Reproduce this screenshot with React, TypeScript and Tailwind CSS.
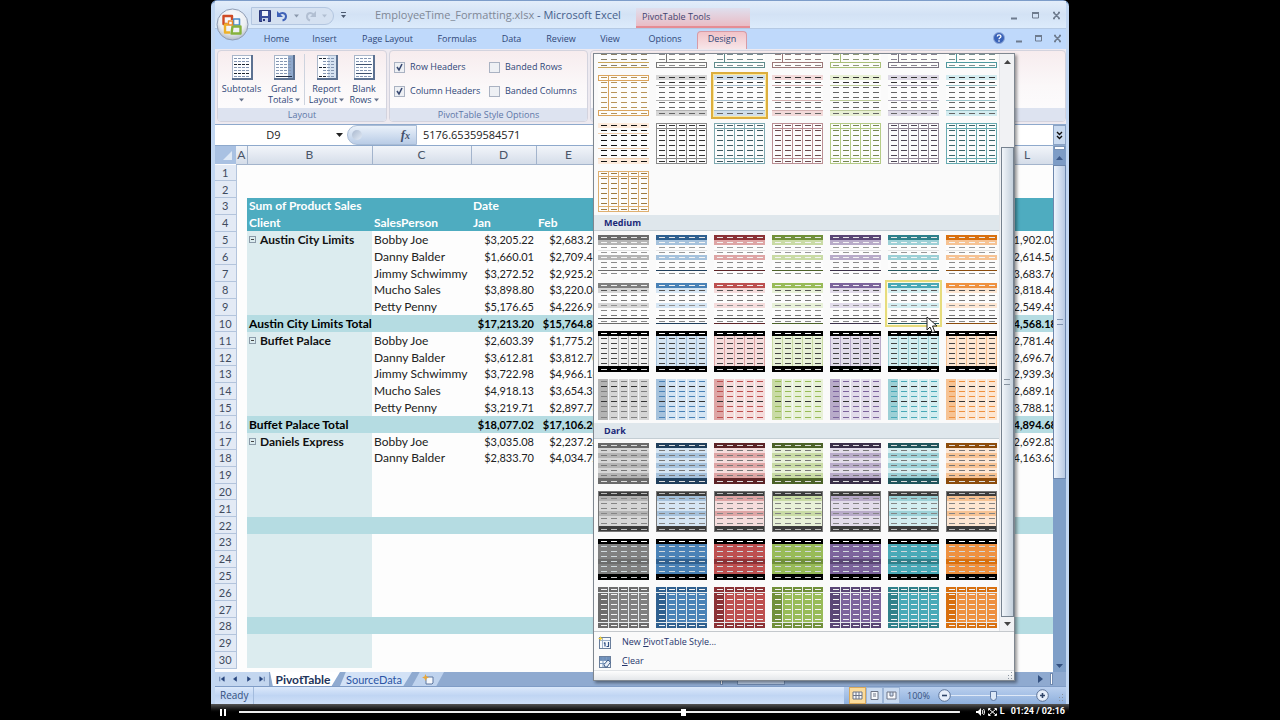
import type { ReactNode } from "react";

interface Palette {
  name: string;
  base: string;
  dark: string;
  deep: string;
  mid: string;
  light: string;
  pale: string;
}

const palettes: Palette[] = [
  { name: "Gray", base: "#808080", dark: "#6c6c6c", deep: "#6a6a6a", mid: "#b4b4b4", light: "#d6d6d6", pale: "#f0f0f0" },
  { name: "Blue", base: "#4a82b6", dark: "#2f608f", deep: "#203f5c", mid: "#a6c2dc", light: "#d5e5f3", pale: "#d5e5f3" },
  { name: "Red", base: "#bd5050", dark: "#8c3236", deep: "#5d2427", mid: "#dea5a5", light: "#f5dcdc", pale: "#f5dcdc" },
  { name: "Green", base: "#98bb58", dark: "#71903a", deep: "#4c6228", mid: "#c9dba5", light: "#e8f1d8", pale: "#e8f1d8" },
  { name: "Purple", base: "#7c649c", dark: "#5b4776", deep: "#3b3049", mid: "#b8abc9", light: "#e2dcea", pale: "#e2dcea" },
  { name: "Teal", base: "#49a9b7", dark: "#2f808a", deep: "#21565d", mid: "#9dd0d6", light: "#d3edf0", pale: "#d3edf0" },
  { name: "Orange", base: "#ee9140", dark: "#d8700f", deep: "#8c4c0c", mid: "#f6c394", light: "#fde6d2", pale: "#fde6d2" },
];

interface ThumbStyle {
  fills: string[];
  dashes: string[];
  firstCol?: string;
  outline?: string;
  columns?: string;
  boxes?: { y: number; color: string }[];
  stem?: string;
  lines?: { y: number; color: string }[];
}

const W = "#fcfcfc";
const repeat = (color: string, n = 8) => Array<string>(n).fill(color);

const boxed = (line: string, dash: string): ThumbStyle => ({
  fills: repeat("#fdfdfb"),
  dashes: repeat(dash),
  stem: line,
  boxes: [
    { y: 0, color: line },
    { y: 35, color: line },
  ],
});

const banded = (light: string, line: string): ThumbStyle => ({
  fills: [light, ...repeat(W, 6), light],
  dashes: ["#333", "#333", ...repeat("#666", 6)],
  lines: [
    { y: 10, color: line },
    { y: 25, color: line },
    { y: 35, color: line },
  ],
});

const gridded = (line: string, dash: string): ThumbStyle => ({
  fills: repeat(W),
  dashes: repeat(dash),
  outline: line,
  columns: line,
  lines: [
    { y: 5, color: line },
    { y: 35, color: line },
  ],
});

const medium1 = (p: Palette): ThumbStyle => ({
  fills: [p.dark, p.mid, W, W, p.mid, W, W, W],
  dashes: ["#e8e8e8", "#f4f4f4", "#9a9a9a", "#9a9a9a", "#f4f4f4", "#8a8a8a", "#8a8a8a", "#8a8a8a"],
  lines: [
    { y: 15, color: "#e4e4e4" },
    { y: 35, color: p.deep },
  ],
});

const medium2 = (p: Palette): ThumbStyle => ({
  fills: [p.base, p.light, W, W, p.light, W, W, W],
  dashes: ["#f0f0f0", "#555", "#777", "#777", "#909090", "#888", "#777", "#888"],
  lines: [
    { y: 35, color: "#444" },
    { y: 40, color: p.deep },
  ],
});

const medium3 = (p: Palette): ThumbStyle => ({
  fills: ["#000", ...repeat(p.pale, 6), "#000"],
  dashes: ["#fff", ...repeat("#444", 6), "#ddd"],
  outline: p.mid,
  columns: p.mid,
});

const medium4 = (p: Palette): ThumbStyle => ({
  fills: repeat(p.light),
  dashes: [p.base, "#333", p.base, p.base, "#333", p.base, p.base, p.base],
  firstCol: p.mid,
  columns: "#f4f6f8",
});

const dark1 = (p: Palette): ThumbStyle => ({
  fills: [p.deep, p.light, p.mid, p.light, p.mid, p.light, p.mid, p.deep],
  dashes: ["#ddd", ...repeat("#777", 6), "#ddd"],
});

const dark2 = (p: Palette): ThumbStyle => ({
  fills: ["#3c3c3c", p.mid, p.light, p.light, p.mid, p.light, p.light, "#3c3c3c"],
  dashes: ["#bbb", ...repeat("#858585", 6), "#bbb"],
  outline: "#777",
});

const dark3 = (p: Palette): ThumbStyle => ({
  fills: ["#000", p.base, p.base, p.base, p.dark, p.base, p.base, "#000"],
  dashes: ["#fff", ...repeat("#d0d8dc", 6), "#ccc"],
});

const dark4 = (p: Palette): ThumbStyle => ({
  fills: [p.dark, ...repeat(p.base, 6), p.dark],
  dashes: repeat("#f4f4f4"),
  firstCol: p.dark,
  columns: "#e4e9ec",
  lines: [
    { y: 5, color: "#e8ecee" },
    { y: 35, color: "#e8ecee" },
  ],
});

const lightStyles: ThumbStyle[] = [
  {
    fills: repeat(W),
    dashes: repeat("#8a8068"),
    lines: [
      { y: 35, color: "#c9a55a" },
      { y: 40, color: "#c9a55a" },
    ],
  },
  boxed("#777", "#888"),
  boxed("#5f8c8c", "#7a8c90"),
  boxed("#9c7878", "#908080"),
  boxed("#a9bf78", "#8f9a78"),
  boxed("#7a7482", "#888390"),
  boxed("#4f999f", "#7a9090"),
  boxed("#dba45c", "#b89458"),
  banded("#d6d6d6", "#b4b4b4"),
  banded("#d0deea", "#a5bccb"),
  banded("#f2d9d9", "#d4b0b0"),
  banded("#e8f0d4", "#bccb98"),
  banded("#dedae6", "#b4aebe"),
  banded("#d3ecf0", "#9bc4ca"),
  { ...banded("#fdebdc", "#f0cfae"), dashes: repeat("#111") },
  gridded("#8a8a8a", "#333"),
  gridded("#7fa9b0", "#3e5c64"),
  gridded("#bb8f94", "#6c4a4e"),
  gridded("#b5cb86", "#76884e"),
  gridded("#968c9b", "#4c4454"),
  gridded("#67abb1", "#3a656a"),
  gridded("#dfb070", "#9c7a40"),
];

const thumbTitles = ["Light", "Medium", "Dark"];
const thumbGroups: ThumbStyle[][] = [
  lightStyles,
  [medium1, medium2, medium3, medium4].flatMap((make) => palettes.map(make)),
  [dark1, dark2, dark3, dark4].flatMap((make) => palettes.map(make)),
];

const Thumb = ({ fills, dashes, firstCol, outline, columns, boxes, stem, lines }: ThumbStyle) => (
  <svg width="51" height="41" viewBox="0 0 51 41" shapeRendering="crispEdges" className="block">
    {fills.map((fill, i) => (
      <rect key={i} x="0" y={i * 5} width="51" height={i === 7 ? 6 : 5} fill={fill} />
    ))}
    {firstCol && <rect x="0" y="0" width="10" height="41" fill={firstCol} />}
    {columns &&
      [10, 20, 30, 40].map((x) => (
        <rect
          key={x}
          x={x}
          y={fills[0] === "#000" ? 5 : 0}
          width="1"
          height={fills[0] === "#000" ? 30 : 41}
          fill={columns}
        />
      ))}
    {lines?.map((l) => (
      <rect key={l.y} x="0" y={l.y} width="51" height="1" fill={l.color} />
    ))}
    {stem && <rect x="10" y="0" width="1" height="36" fill={stem} />}
    {boxes?.map((b) => (
      <rect key={b.y} x="0.5" y={b.y + 0.5} width="50" height="5" fill="none" stroke={b.color} />
    ))}
    {outline && <rect x="0.5" y="0.5" width="50" height="40" fill="none" stroke={outline} />}
    {fills[0] === "#000" && (
      <>
        <rect width="51" height="5" fill="#000" />
        <rect y="35" width="51" height="6" fill="#000" />
      </>
    )}
    {dashes.map((color, i) =>
      [3, 13, 23, 33, 43].map((x) => (
        <rect key={`${i}-${x}`} x={x} y={i === 7 ? 38 : i * 5 + 2} width="6" height="1" fill={color} />
      )),
    )}
  </svg>
);

const PointerArrow = () => (
  <svg width="12" height="18" viewBox="0 0 12 18" className="pointer-events-none absolute top-[33px] left-[38px] z-10">
    <path d="M1 1v13l3-3 2.400 5.600 2.400-1L6.500 10H11z" fill="#fff" stroke="#222" strokeWidth="1" />
  </svg>
);

const StyleGallery = () => (
  <div className="absolute top-[53px] left-[382px] flex h-[628px] w-[422px] flex-col border border-[#7f8790] bg-[#fafafa] shadow-[2px_2px_3px_rgba(0,0,0,0.4)]">
    <div className="flex min-h-0 flex-1 border-[#c4c8cc] border-b">
      <div className="flex min-w-0 flex-1 flex-col justify-end overflow-hidden">
        {thumbGroups.map((styles, g) => (
          <section key={thumbTitles[g]} className="shrink-0">
            {g > 0 && (
              <h3 className="h-4 border-[#c3cdd3] border-b bg-[#dfe7ec] pl-[10px] font-bold text-[#1b2a78] text-[9px] leading-4">
                {thumbTitles[g]}
              </h3>
            )}
            <div className="grid grid-cols-[repeat(7,51px)] gap-[7px] pt-1 pb-[3px] pl-1">
              {styles.map((style, i) => {
                const selected = g === 0 && i === 9;
                const hovered = g === 1 && i === 12;
                return (
                  <button
                    key={i}
                    type="button"
                    aria-label={`${thumbTitles[g]} style ${i + 1}`}
                    className={
                      selected
                        ? "relative shadow-[0_0_0_1px_#fbe9a0,0_0_0_3px_#dcae3e]"
                        : hovered
                          ? "relative shadow-[0_0_0_1px_#fdfbe6,0_0_0_3px_#e6dc7c]"
                          : "relative"
                    }
                  >
                    <Thumb {...style} />
                    {hovered && <PointerArrow />}
                  </button>
                );
              })}
            </div>
          </section>
        ))}
      </div>
      <div className="flex w-[15px] flex-col items-center border-[#e2e5e8] border-l bg-[#f1f2f4]">
        <Arrow dir="up" className="my-[6px] text-[#444]" />
        <div className="mt-[77px] flex w-[13px] flex-1 items-center justify-center border border-[#76828f] bg-linear-to-r from-[#f2f6fa] to-[#c4d0dc]">
          <span className="h-[6px] w-[6px] border-[#8793a0] border-y" />
        </div>
        <Arrow dir="down" className="my-[5px] text-[#444]" />
      </div>
    </div>
    <div className="flex flex-col text-[#26356b] text-[9px]">
      <button type="button" className="flex h-5 items-center gap-[11px] pl-1 text-left">
        <MenuIcon fresh />
        <span>
          New <u>P</u>ivotTable Style...
        </span>
      </button>
      <button type="button" className="flex h-[18px] items-center gap-[11px] pl-1 text-left">
        <MenuIcon />
        <span>
          <u>C</u>lear
        </span>
      </button>
    </div>
    <div className="flex h-[10px] items-end justify-end border-[#e0e3e6] border-t bg-linear-to-b from-[#fdfdfd] to-[#e4e7ea] p-px">
      <Grip />
    </div>
  </div>
);

const Arrow = ({ dir, className = "" }: { dir: "up" | "down"; className?: string }) => (
  <svg width="7" height="4" viewBox="0 0 7 4" className={`shrink-0 ${className}`}>
    <path d={dir === "up" ? "M0 4 3.500 0 7 4z" : "M0 0h7L3.500 4z"} fill="currentColor" />
  </svg>
);

const Grip = () => (
  <svg width="7" height="7" viewBox="0 0 7 7" fill="#8a94a0">
    <path d="M5 0h1v1H5zM5 3h1v1H5zM5 6h1v1H5zM2 3h1v1H2zM2 6h1v1H2z" />
  </svg>
);

const MenuIcon = ({ fresh = false }: { fresh?: boolean }) => (
  <svg width="13" height="13" viewBox="0 0 13 13">
    <rect x="1.500" y="1.500" width="11" height="11" fill="#f6f9fc" stroke="#6a7f9c" />
    {fresh ? (
      <>
        <path d="M2 4.500h10M4.500 2v10" stroke="#9fb3cc" />
        <path d="M7 6.500v4M6 7.500l1-1M8.500 10.500h2.500M10.500 6v4.500" stroke="#2f4f84" fill="none" strokeWidth="1.200" />
        <path d="m2.500 0 .8 1.700L5 2.500l-1.700.8-.8 1.700-.8-1.700L0 2.500l1.700-.8z" fill="#f2d13c" />
      </>
    ) : (
      <>
        <path d="M2 2h10v3H2z" fill="#6d8fba" />
        <path d="M2 5.500h10M2 8.500h10M5 2v10M8.500 2v10" stroke="#7c99be" />
        <path d="M6 9.500 10 5l2.500 2.200L9 12H7z" fill="#e8eef6" stroke="#3d5c89" />
      </>
    )}
  </svg>
);

const OfficeButton = () => (
  <button type="button" aria-label="Office Button" className="absolute top-2 left-[5px] z-10">
    <svg width="33" height="33" viewBox="0 0 33 33">
      <defs>
        <radialGradient id="orb" cx="50%" cy="35%" r="65%">
          <stop offset="0" stopColor="#fff" />
          <stop offset="0.65" stopColor="#eceff3" />
          <stop offset="1" stopColor="#b4bcc8" />
        </radialGradient>
      </defs>
      <circle cx="16.500" cy="16.500" r="15.500" fill="url(#orb)" stroke="#8e9cb4" />
      <g fill="none" strokeWidth="2.400" strokeLinejoin="round">
        <path d="M11.500 16H7.500V8H16v4" stroke="#cf4a24" />
        <path d="M17.500 11h6v6h-6z" stroke="#4a8cc9" strokeWidth="1.600" />
        <path d="M12 16.500H9v8h5" stroke="#edb12a" />
        <path d="M16.500 18.500h8v7h-9z" stroke="#86b23c" />
        <path d="M12.500 13h4v4h-4z" stroke="#f08a2a" strokeWidth="1.500" />
      </g>
    </svg>
  </button>
);

const WindowButtons = () => (
  <>
    <button type="button" aria-label="Minimize">
      <svg width="9" height="9" viewBox="0 0 9 9" stroke="#6e7b8e" className="block">
        <path d="M1 7.500h6" strokeWidth="2" />
      </svg>
    </button>
    <button type="button" aria-label="Restore">
      <svg width="9" height="9" viewBox="0 0 9 9" fill="none" stroke="#6e7b8e" className="block">
        <path d="M1 2h7" strokeWidth="2" />
        <path d="M1.500 2v5h6V2" />
      </svg>
    </button>
    <button type="button" aria-label="Close">
      <svg width="9" height="9" viewBox="0 0 9 9" stroke="#6e7b8e" strokeWidth="1.600" className="block">
        <path d="m1.500 1.500 6 6M7.500 1.500l-6 6M1 1.500h2M6 1.500h2M1 7.500h2M6 7.500h2" />
      </svg>
    </button>
  </>
);

const TitleBar = () => (
  <header className="flex h-7 items-center border-[#b4c9e4] border-b bg-linear-to-b from-[#e3edfa] via-[#d3e2f5] to-[#dcebfb] pt-[2px] pl-9">
    <div className="flex h-[18px] w-[83px] items-center gap-[6px] rounded-r-full border border-[#b3c6e0] bg-[#d5e1f1] pl-[7px]">
      <svg width="12" height="12" viewBox="0 0 12 12">
        <path d="M.5.5h11v11h-11z" fill="#3c4f9c" stroke="#2b3878" />
        <path d="M3 1h6v5H3z" fill="#f2f5fb" />
        <path d="M3 8h6v4H3z" fill="#c9d4ea" />
        <path d="M4 9h2v2H4z" fill="#2b3878" />
      </svg>
      <svg width="11" height="12" viewBox="0 0 11 12" fill="none">
        <path d="M2 4.500c3-2.500 7-1.500 7 2 0 2-1.500 3.500-3.500 4" stroke="#3f62b8" strokeWidth="2" />
        <path d="M0 1v6h6z" fill="#3f62b8" />
      </svg>
      <Arrow dir="down" className="w-[5px] text-[#8a98ac]" />
      <svg width="11" height="12" viewBox="0 0 11 12" fill="none">
        <path d="M8.500 4.500c-3-2.500-6.500-1.500-6.500 2 0 2 1.500 3.500 3 4" stroke="#b2bfd2" strokeWidth="2" />
        <path d="M11 1v6H5z" fill="#b2bfd2" />
      </svg>
      <Arrow dir="down" className="w-[5px] text-[#b2bfd2]" />
    </div>
    <svg width="7" height="7" viewBox="0 0 7 7" fill="#4c5a70" className="ml-[6px]">
      <path d="M1 0h5v1H1zM1 3h5L3.500 6z" />
    </svg>
    <h1 className="ml-7 w-[261px] whitespace-nowrap text-[#46618c] text-[11px]">
      <span className="text-[#7f8896]">EmployeeTime_Formatting.xlsx</span> - Microsoft Excel
    </h1>
    <p className="h-5 w-[114px] self-end border-[#e58c94] border-b-2 bg-linear-to-b from-[#dfdfee] to-[#e9bcc5] pl-[6px] text-[#3f4470] text-[9px] leading-[18px]">
      PivotTable Tools
    </p>
    <div className="mr-[5px] ml-auto flex gap-3">
      <WindowButtons />
    </div>
  </header>
);

const ribbonTabs = [
  { label: "Home", width: "w-[51px]" },
  { label: "Insert", width: "w-[45px]" },
  { label: "Page Layout", width: "w-[81px]" },
  { label: "Formulas", width: "w-[58px]" },
  { label: "Data", width: "w-[51px]" },
  { label: "Review", width: "w-[48px]" },
  { label: "View", width: "w-[50px]" },
  { label: "Options", width: "w-[60px]" },
];

const RibbonTabs = () => (
  <nav className="flex h-5 items-stretch bg-[#bfd9fb] pl-9 text-[#2f4778] text-[9px]">
    {ribbonTabs.map((tab) => (
      <button key={tab.label} type="button" className={`text-center ${tab.width}`}>
        {tab.label}
      </button>
    ))}
    <button
      type="button"
      className="mt-[2px] ml-[2px] w-[50px] rounded-t-sm border border-[#d79ba6] border-b-0 bg-linear-to-b from-[#f1c3c8] to-[#f7e6e9] pb-[3px]"
    >
      Design
    </button>
    <div className="mr-1 mb-[2px] ml-auto flex items-center gap-[10px]">
      <svg width="12" height="12" viewBox="0 0 12 12">
        <circle cx="6" cy="6" r="5.500" fill="#3a63b8" stroke="#8fa9d8" />
        <path
          d="M4.300 4.600c0-2.200 3.600-2.200 3.600-.2C7.900 5.700 6 5.700 6 7.200M6 8.300v1.400"
          fill="none"
          stroke="#fff"
          strokeWidth="1.300"
        />
      </svg>
      <WindowButtons />
    </div>
  </nav>
);

type SheetIconKind = "subtotals" | "grand" | "report" | "blank";

const SheetIcon = ({ kind }: { kind: SheetIconKind }) => (
  <svg width="22" height="26" viewBox="0 0 22 26" shapeRendering="crispEdges">
    <rect x="1" y="1" width="20" height="24" fill="#fcfdff" stroke="#a9b6c9" />
    <rect x="20" y="1" width="2" height="25" fill="#5c7191" />
    <rect x="1" y="24" width="21" height="2" fill="#5c7191" />
    {kind === "grand" && <rect x="15" y="2" width="5" height="22" fill="#8fa8cc" />}
    {kind === "report" && <rect x="12" y="2" width="8" height="22" fill="#d6e2f1" />}
    {[4, 7, 10, 13, 16, 19, 22].map((y, row) =>
      [3, 7, 11, 15].map((x, col) => {
        if (kind === "blank" && row % 3 === 2) return null;
        if (kind === "report" && col === 0 && row % 3 !== 0) return null;
        const strong = (kind === "subtotals" && row % 3 === 2) || (kind === "report" && row % 3 === 0 && col < 2);
        return <rect key={`${y}-${x}`} x={x} y={y} width="3" height="1" fill={strong ? "#1c2430" : "#8496b2"} />;
      }),
    )}
    {kind === "blank" && <path d="M3 10.500h16M3 19.500h16" stroke="#3c4f6e" />}
    {kind === "grand" && <path d="M3 22.500h16" stroke="#26324a" />}
  </svg>
);

const layoutButtons: { lines: string[]; kind: SheetIconKind; width: string }[] = [
  { lines: ["Subtotals", ""], kind: "subtotals", width: "w-[45px]" },
  { lines: ["Grand", "Totals"], kind: "grand", width: "w-[40px]" },
  { lines: ["Report", "Layout"], kind: "report", width: "w-[44px] border-[#cdd3de] border-l" },
  { lines: ["Blank", "Rows"], kind: "blank", width: "w-[32px]" },
];

const RibbonGroup = ({ title, width, children }: { title: string; width: string; children: ReactNode }) => (
  <section
    className={`flex flex-col overflow-hidden rounded-sm border border-[#d3d3de] bg-linear-to-b from-[#f7ecee] via-[#fbf8f9] to-[#fdfdfe] ${width}`}
  >
    <div className="flex-1">{children}</div>
    <h2 className="h-[13px] bg-[#dde3f0] text-center text-[#5d77a8] text-[9px] leading-[13px]">{title}</h2>
  </section>
);

const CheckOption = ({ label, checked = false }: { label: string; checked?: boolean }) => (
  <label className="flex items-center gap-[5px]">
    <span className="relative flex">
      <input
        type="checkbox"
        defaultChecked={checked}
        className="peer h-[11px] w-[11px] appearance-none border border-[#aab2c2] bg-[#eef0f4]"
      />
      <svg
        viewBox="0 0 11 11"
        className="pointer-events-none absolute inset-0 hidden h-[11px] w-[11px] peer-checked:block"
      >
        <path d="m3 5 2 3 3-6" fill="none" stroke="#3a4a72" strokeWidth="1.600" />
      </svg>
    </span>
    {label}
  </label>
);

const Ribbon = () => (
  <div className="flex h-[75px] gap-[2px] bg-[#eeeaf0] pt-px pb-[2px] pl-[2px] text-[#2f4778] text-[9px]">
    <RibbonGroup title="Layout" width="w-[170px]">
      <div className="flex pt-[3px] pl-px">
        {layoutButtons.map((button) => (
          <button
            key={button.lines[0]}
            type="button"
            className={`flex shrink-0 flex-col items-center leading-[11px] ${button.width}`}
          >
            <SheetIcon kind={button.kind} />
            <span className="mt-[3px]">{button.lines[0]}</span>
            <span className="flex h-[11px] items-center gap-[2px]">
              {button.lines[1]}
              <Arrow dir="down" className="w-[5px] text-[#66738c]" />
            </span>
          </button>
        ))}
      </div>
    </RibbonGroup>
    <RibbonGroup title="PivotTable Style Options" width="w-[199px]">
      <div className="grid grid-cols-[95px_auto] gap-y-[12px] pt-[10px] pl-1 leading-3">
        <CheckOption label="Row Headers" checked />
        <CheckOption label="Banded Rows" />
        <CheckOption label="Column Headers" checked />
        <CheckOption label="Banded Columns" />
      </div>
    </RibbonGroup>
    <RibbonGroup title="" width="flex-1">
      {null}
    </RibbonGroup>
  </div>
);

const FormulaBar = () => (
  <div className="flex h-[22px] border-[#8ea9cc] border-y bg-white text-[#222] text-[11px]">
    <input aria-label="Name box" defaultValue="D9" className="w-[117px] text-center" />
    <button type="button" aria-label="Name list" className="px-1">
      <Arrow dir="down" className="text-[#222]" />
    </button>
    <div className="flex w-[70px] items-center justify-between rounded-l-full border border-[#a9bcd6] bg-linear-to-b from-[#eaf1fa] to-[#b9cce6] pr-[6px] pl-1">
      <span className="h-[10px] w-[10px] rounded-full bg-linear-to-br from-[#aab9cf] to-[#e3ebf6]" />
      <span className="font-['Liberation_Serif',serif] font-bold text-[#44516c] text-[13px] italic">
        f<span className="text-[10px]">x</span>
      </span>
    </div>
    <input aria-label="Formula" defaultValue="5176.65359584571" className="min-w-0 flex-1 pl-[6px]" />
    <button
      type="button"
      aria-label="Expand formula bar"
      className="flex w-[13px] items-center justify-center border border-[#8aa2c4] bg-[#c9daf0]"
    >
      <svg width="7" height="9" viewBox="0 0 7 9" fill="none" stroke="#111" strokeWidth="1.400">
        <path d="m1 1 2.500 2.500L6 1M1 5l2.500 2.500L6 5" />
      </svg>
    </button>
  </div>
);

interface SheetRow {
  client?: string;
  person?: string;
  jan?: string;
  feb?: string;
  last?: string;
  kind?: "head" | "total" | "empty";
}

const rows: SheetRow[] = [
  { kind: "empty" },
  { kind: "empty" },
  { client: "Sum of Product Sales", jan: "Date", kind: "head" },
  { client: "Client", person: "SalesPerson", jan: "Jan", feb: "Feb", kind: "head" },
  { client: "Austin City Limits", person: "Bobby Joe", jan: "$3,205.22", feb: "$2,683.22", last: "$1,902.03" },
  { person: "Danny Balder", jan: "$1,660.01", feb: "$2,709.41", last: "$2,614.56" },
  { person: "Jimmy Schwimmy", jan: "$3,272.52", feb: "$2,925.20", last: "$3,683.76" },
  { person: "Mucho Sales", jan: "$3,898.80", feb: "$3,220.04", last: "$3,818.46" },
  { person: "Petty Penny", jan: "$5,176.65", feb: "$4,226.98", last: "$2,549.45" },
  { client: "Austin City Limits Total", jan: "$17,213.20", feb: "$15,764.85", last: "$14,568.18", kind: "total" },
  { client: "Buffet Palace", person: "Bobby Joe", jan: "$2,603.39", feb: "$1,775.25", last: "$2,781.46" },
  { person: "Danny Balder", jan: "$3,612.81", feb: "$3,812.70", last: "$2,696.76" },
  { person: "Jimmy Schwimmy", jan: "$3,722.98", feb: "$4,966.18", last: "$2,939.36" },
  { person: "Mucho Sales", jan: "$4,918.13", feb: "$3,654.31", last: "$2,689.16" },
  { person: "Petty Penny", jan: "$3,219.71", feb: "$2,897.76", last: "$3,788.13" },
  { client: "Buffet Palace Total", jan: "$18,077.02", feb: "$17,106.20", last: "$14,894.68", kind: "total" },
  { client: "Daniels Express", person: "Bobby Joe", jan: "$3,035.08", feb: "$2,237.24", last: "$2,692.83" },
  { person: "Danny Balder", jan: "$2,833.70", feb: "$4,034.72", last: "$4,163.63" },
  {},
  {},
  {},
  { kind: "total" },
  {},
  {},
  {},
  {},
  {},
  { kind: "total" },
  {},
  {},
];

const columns = [
  { name: "A", width: "w-[11px]" },
  { name: "B", width: "w-[125px]" },
  { name: "C", width: "w-[99px]" },
  { name: "D", width: "w-[65px]" },
  { name: "E", width: "w-[65px]" },
  { name: "F", width: "w-[66px]" },
  { name: "G", width: "w-[66px]" },
  { name: "H", width: "w-[66px]" },
  { name: "I", width: "w-[66px]" },
  { name: "J", width: "w-[65px]" },
  { name: "K", width: "w-[65px]" },
  { name: "L", width: "w-[64px]" },
];

const rowTone = {
  head: "bg-[#4eacc0] font-bold text-white",
  total: "bg-[#b5dce2] font-bold text-black",
  empty: "bg-[#fdfdfd]",
  body: "bg-[#fdfdfd] text-[#222]",
};

const Sheet = () => (
  <div className="flex min-h-0 flex-1">
    <div className="min-w-0 flex-1 overflow-hidden bg-[#fdfdfd]">
      <table className="w-[844px] table-fixed border-collapse font-['Lato',sans-serif] text-[12px] leading-4">
        <thead className="text-[#4a5568]">
          <tr className="h-[18px] bg-linear-to-b from-[#f2f5fa] to-[#d5dde9]">
            <th className="w-[21px] bg-[#a9c1e2] p-0">
              <svg width="21" height="16" viewBox="0 0 21 16" className="block">
                <path d="M17 4v9H8z" fill="#dfe9f6" />
              </svg>
            </th>
            {columns.map((col) => (
              <th key={col.name} className={`border-[#a3b4cc] border-r border-b p-0 font-normal ${col.width}`}>
                {col.name}
              </th>
            ))}
          </tr>
        </thead>
      </table>
      <table className="h-[504px] w-[844px] table-fixed border-collapse font-['Lato',sans-serif] text-[12px] leading-[15px]">
        <colgroup>
          <col className="w-[21px]" />
          {columns.map((col) => (
            <col key={col.name} className={col.width} />
          ))}
        </colgroup>
        <tbody>
          {rows.map((row, i) => {
            const head = row.kind === "head";
            const tone = rowTone[row.kind ?? "body"];
            return (
              <tr key={i}>
                <th
                  scope="row"
                  className="border-[#b3c4dc] border-r border-b bg-[#e3eaf5] p-0 text-center font-normal text-[#3f4a5e] text-[11px]"
                >
                  {i + 1}
                </th>
                <td className="p-0" />
                <td
                  className={`whitespace-nowrap p-0 pl-[2px] font-bold ${row.kind ? tone : "bg-[#dcecef] text-[#111]"}`}
                >
                  {row.client && !row.kind ? (
                    <span className="flex items-center gap-1">
                      <button
                        type="button"
                        aria-label={`Collapse ${row.client}`}
                        className="flex h-[7px] w-[7px] items-center justify-center border border-[#8a9aa8]"
                      >
                        <span className="h-px w-[3px] bg-[#444]" />
                      </button>
                      {row.client}
                    </span>
                  ) : (
                    row.client
                  )}
                </td>
                <td className={`whitespace-nowrap p-0 pl-[2px] ${tone}`}>{row.person}</td>
                <td className={`p-0 px-[2px] ${head ? "text-left" : "text-right text-[11px]"} ${tone}`}>{row.jan}</td>
                <td className={`p-0 px-[2px] ${head ? "text-left" : "text-right text-[11px]"} ${tone}`}>{row.feb}</td>
                <td colSpan={6} className={`p-0 ${tone}`} />
                <td className={`p-0 px-[2px] text-right text-[11px] ${tone}`}>{row.last}</td>
              </tr>
            );
          })}
        </tbody>
      </table>
    </div>
    <div className="flex w-[13px] flex-col bg-[#7f9fc8]">
      <div className="mx-px h-1 border border-[#7b93b5] bg-white" />
      <div className="flex h-[15px] items-center justify-center bg-[#7d9cc6] text-[#3d5a8a]">
        <Arrow dir="up" />
      </div>
      <div className="flex h-[314px] items-center justify-center border border-[#6d87ad] bg-linear-to-r from-[#eef4fc] to-[#b9cbe4]">
        <span className="h-[6px] w-[6px] border-[#7f93b0] border-y" />
      </div>
      <div className="mt-auto mb-1 flex justify-center text-[#33507f]">
        <Arrow dir="down" />
      </div>
    </div>
  </div>
);

const navPaths = ["M1 1v6M7 1 3 4l4 3z", "M6 1 2 4l4 3z", "M2 1l4 3-4 3z", "M7 1v6M1 1l4 3-4 3z"];

const SheetTabs = () => (
  <div className="flex h-[14px] bg-[#8faad0] leading-[13px]">
    <div className="flex w-[55px] items-center justify-around border-[#8ba3c6] border-r bg-[#c3d6ef]">
      {navPaths.map((d) => (
        <button key={d} type="button" aria-label="Scroll sheets">
          <svg width="6" height="8" viewBox="0 0 8 8" fill="#24427a" stroke="#24427a" strokeWidth="0.800">
            <path d={d} />
          </svg>
        </button>
      ))}
    </div>
    <button
      type="button"
      className="w-[70px] bg-white pr-1 text-center font-['Lato',sans-serif] font-bold text-[#23355a] text-[12px] [clip-path:polygon(0_0,100%_0,88%_100%,4%_100%)]"
    >
      PivotTable
    </button>
    <button
      type="button"
      className="w-[72px] bg-[#d3e2f6] pr-1 font-['Lato',sans-serif] text-[#2b55a5] text-[11px] [clip-path:polygon(8%_0,100%_0,88%_100%,0_100%)]"
    >
      SourceData
    </button>
    <button
      type="button"
      aria-label="Insert worksheet"
      className="flex w-[32px] items-center justify-center bg-[#bfd3ee] [clip-path:polygon(24%_0,100%_0,76%_100%,0_100%)]"
    >
      <svg width="12" height="11" viewBox="0 0 12 11">
        <path d="M4 3h7v6l-1 1H4z" fill="#f5f8fc" stroke="#5d77a0" />
        <path d="m3.500 0 1 2.500L7 3.500l-2.500 1-1 2.500-1-2.500L0 3.500l2.500-1z" fill="#e9a83a" />
      </svg>
    </button>
    <div className="ml-auto flex w-[346px] items-center">
      <span className="h-3 w-[3px] border border-[#6f89af] bg-white" />
      <span className="ml-[14px] h-3 w-12 border border-[#6f89af] bg-[#bdd0ea]" />
      <svg width="5" height="8" viewBox="0 0 5 8" fill="#33507f" className="mr-[7px] ml-auto">
        <path d="M0 0l5 4-5 4z" />
      </svg>
      <span className="mr-[13px] h-3 w-[3px] border border-[#6f89af] bg-white" />
    </div>
  </div>
);

const viewPaths = ["M2 2h9v7H2zM2 5.500h9M5 2v7M8 2v7", "M3 1.500h7v8H3zM5 4h3M5 6h3", "M2 2h9v7H2zM5 2v4h3V2"];

const StatusBar = () => (
  <footer className="flex h-[18px] items-center border-[#7f9cc6] border-t bg-linear-to-b from-[#dce9fb] via-[#c0d5f3] to-[#cfe0f8] text-[#34507f]">
    <span className="h-full w-[39px] border-[#a3bbdd] border-r pl-[5px] text-[10px] leading-[17px]">Ready</span>
    <div className="ml-auto flex h-full items-center bg-linear-to-b from-[#b9cfee] to-[#8fb0dd] pl-[5px]">
      {viewPaths.map((d, i) => (
        <button
          key={d}
          type="button"
          aria-label="Change view"
          className={
            i === 0
              ? "border border-[#d9a95c] bg-[#fbdc9c] px-px py-[2px]"
              : "border border-[#9db5d6] bg-[#c9daf0] px-px py-[2px]"
          }
        >
          <svg width="13" height="11" viewBox="0 0 13 11" fill="#f6f8fb" stroke="#6d7486">
            <path d={d} />
          </svg>
        </button>
      ))}
      <span className="ml-[7px] w-[31px] text-[9px]">100%</span>
      <button type="button" aria-label="Zoom out">
        <ZoomIcon d="M4 6.500h5" />
      </button>
      <input
        type="range"
        aria-label="Zoom"
        defaultValue={50}
        className="h-3 w-[85px] appearance-none bg-[linear-gradient(#dfe9f7,#dfe9f7)] bg-center bg-no-repeat [background-size:100%_1px] [&::-webkit-slider-thumb]:h-[10px] [&::-webkit-slider-thumb]:w-[7px] [&::-webkit-slider-thumb]:appearance-none [&::-webkit-slider-thumb]:rounded-b-full [&::-webkit-slider-thumb]:border [&::-webkit-slider-thumb]:border-[#5c77a3] [&::-webkit-slider-thumb]:bg-[#dce8f7]"
      />
      <button type="button" aria-label="Zoom in">
        <ZoomIcon d="M4 6.500h5M6.500 4v5" />
      </button>
      <span className="mt-1 mr-[2px] ml-2">
        <Grip />
      </span>
    </div>
  </footer>
);

const ZoomIcon = ({ d }: { d: string }) => (
  <svg width="13" height="13" viewBox="0 0 13 13" className="block">
    <circle cx="6.500" cy="6.500" r="5.800" fill="#e6eefa" stroke="#5f7599" />
    <path d={d} stroke="#2f4468" strokeWidth="1.600" />
  </svg>
);

const PlayerBar = () => (
  <div className="flex h-4 items-center bg-linear-to-b from-[#555] to-60% to-black pl-[9px] text-white">
    <button type="button" aria-label="Pause">
      <svg width="7" height="7" viewBox="0 0 7 7" fill="#fff" className="block">
        <path d="M0 0h2v7H0zM4 0h2v7H4z" />
      </svg>
    </button>
    <input
      type="range"
      aria-label="Seek"
      min={0}
      max={136}
      defaultValue={84}
      className="ml-3 h-2 min-w-0 flex-1 appearance-none bg-[linear-gradient(#eee,#eee)] bg-center bg-no-repeat [background-size:100%_2px] [&::-webkit-slider-thumb]:h-[7px] [&::-webkit-slider-thumb]:w-[5px] [&::-webkit-slider-thumb]:appearance-none [&::-webkit-slider-thumb]:bg-white"
    />
    <div className="ml-4 flex items-center gap-[3px]">
      <svg width="9" height="8" viewBox="0 0 9 8" fill="#fff">
        <path d="M0 3h2l3-3v8L2 5H0z" />
        <path d="M6 2c1 1 1 3 0 4M7.500 1c1.300 1.500 1.300 4.500 0 6" stroke="#fff" fill="none" />
      </svg>
      <svg width="9" height="8" viewBox="0 0 9 8" fill="none" stroke="#fff">
        <path d="M.5 2.500v-2h2M6.500.5h2v2M8.500 5.500v2h-2M2.500 7.500h-2v-2M1 1l7 6M8 1 1 7" />
      </svg>
      <span className="w-[7px] font-['Roboto',sans-serif] font-bold text-[9px]">L</span>
    </div>
    <time className="mr-1 ml-1 font-['Roboto',sans-serif] font-bold text-[9px]">01:24 / 02:16</time>
  </div>
);

export default function App() {
  return (
    <div className="min-h-screen bg-black font-['Open_Sans','Noto_Sans',sans-serif]">
      <main className="relative mx-auto flex min-h-screen w-full max-w-[858px] flex-col">
        <div className="flex flex-1 flex-col rounded-t-md border-[#7d9cc9] border-t-2 bg-[#c2d7f2] pr-[3px] pl-1">
          <OfficeButton />
          <div className="-mt-px">
            <TitleBar />
          </div>
          <RibbonTabs />
          <Ribbon />
          <FormulaBar />
          <Sheet />
          <SheetTabs />
          <StatusBar />
        </div>
        <PlayerBar />
        <StyleGallery />
      </main>
    </div>
  );
}
